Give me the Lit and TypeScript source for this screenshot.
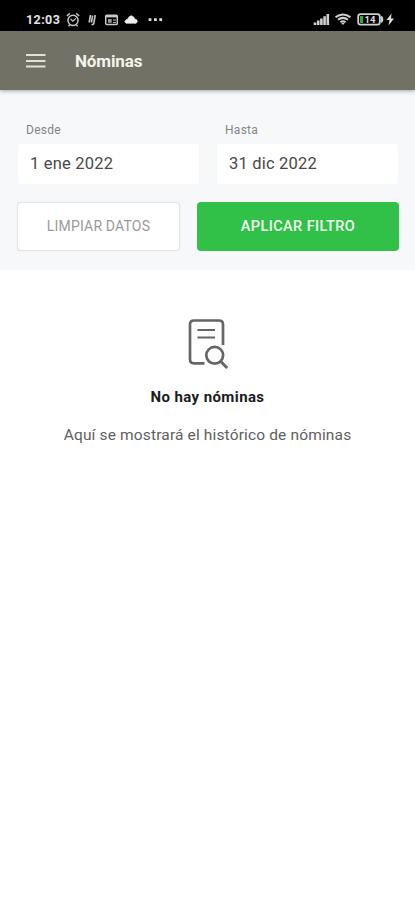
import { LitElement, html, css } from "lit";
import { customElement } from "lit/decorators.js";

@customElement("status-bar")
class StatusBar extends LitElement {
  static styles = css`
    :host { display: flex; justify-content: space-between; box-sizing: border-box; height: 31px;
      padding: 9px 20px 0 26px; background: #000; color: #e4e4e4; }
    .side { display: flex; align-items: flex-start; }
    .time { width: 40px; font: 700 12.5px/21px Roboto, sans-serif; letter-spacing: 0.4px; white-space: nowrap; }
    svg { display: block; flex: none; }
  `;
  render() {
    return html`
      <div class="side">
        <span class="time">12:03</span>
        <svg width="102" height="20" viewBox="66 9 102 20" fill="none" stroke="#c8c8c8">
          <circle cx="73" cy="20.3" r="5.1" stroke-width="1.5" />
          <path d="M66.8 16l3-2.6M79.2 16l-3-2.6M69.5 25l-1 1.3M76.5 25l1 1.3" stroke-width="1.4" />
          <path d="M70.6 19l2.3 2.2 3-2.8" stroke-width="1.2" />
          <path d="M90.4 15l-1.2 7.5M95.2 15l-1.3 8q-.5 2-2.4 1.4M92.6 15.5l-1.2 7" stroke-width="1.6" />
          <rect x="105.7" y="15.2" width="11.6" height="9.3" rx="1" stroke-width="1.5" />
          <path d="M106 16.5h11" stroke-width="1.8" />
          <rect x="108" y="19" width="3.7" height="3.8" fill="#999" stroke="none" />
          <path d="M113 20h3M113 22.4h3" stroke-width="1" />
          <path d="M126 23.3l-1.3-1.6 1-1.6 2-1 1.6-2.6 2.2-.8 2.2 1.3.8 1.8 2.3 1 .6 2-1.2 1.5z" fill="#eee" stroke="#eee" stroke-width=".6" stroke-linejoin="round" />
          <path d="M148.6 18.3h2.8v2.8h-2.8zM154 18.3h2.8v2.8H154zM159.3 18.3h2.8v2.8h-2.8z" fill="#ddd" stroke="none" />
        </svg>
      </div>
      <div class="side">
        <svg width="82" height="20" viewBox="313 9 82 20" fill="none" stroke="#cfcfcf">
          <path d="M315 22.6v2.4M318.2 20.6V25M321.4 18.5V25M324.6 16.3V25M327.8 14V25" stroke-width="2.6" />
          <path d="M335.5 17.3q7.5-5.6 15 0M338 19.8q5-3.8 10 0M340.4 22.2q2.6-2 5.2 0" stroke-width="2" />
          <path d="M341 22.8l2 2.3 2-2.3z" fill="#cfcfcf" stroke="none" />
          <rect x="358.2" y="14.2" width="21.6" height="10.4" rx="2.4" stroke-width="1.8" />
          <path d="M381 16.5q2.4 2.9 0 5.8" stroke-width="2.2" />
          <rect x="360" y="16" width="3" height="7" fill="#35a635" stroke="none" />
          <text x="364.5" y="23" font-family="Roboto, sans-serif" font-size="9.5" font-weight="700" fill="#ddd" stroke="none">14</text>
          <path d="M391.5 13.5l-5 6.5h3l-1 5.5 5.5-7h-3z" fill="#ddd" stroke="none" />
        </svg>
      </div>
    `;
  }
}

@customElement("date-field")
class DateField extends LitElement {
  static properties = { label: {}, value: {} };
  declare label: string;
  declare value: string;
  static styles = css`
    :host { display: block; }
    .label { padding-left: 8px; font-size: 12px; line-height: 16px; color: #858585; letter-spacing: 0.28px; }
    .box { margin-top: 6px; height: 40px; box-sizing: border-box; padding-left: 12px; border-radius: 3px;
      background: #fff; box-shadow: 0 0 2px #eef0f2; font-size: 16.5px; line-height: 40px; color: #484848; letter-spacing: 0.2px; }
  `;
  render() {
    return html`<div class="label">${this.label}</div><div class="box">${this.value}</div>`;
  }
}

@customElement("app-root")
class AppRoot extends LitElement {
  static styles = css`
    :host { display: block; height: 900px; background: #fff; font-family: Roboto, sans-serif; overflow: hidden; }
    .header { position: relative; display: flex; align-items: center; gap: 29px; height: 59px; padding-left: 26px;
      background: #727165; box-shadow: 0 1px 4px rgba(0, 0, 0, 0.35); }
    .header svg { display: block; }
    .title { font-size: 17px; font-weight: 700; line-height: 24px; color: #f4f4ec; letter-spacing: -0.12px; }
    .filters { height: 180px; box-sizing: border-box; padding: 32px 16px 0 18px; background: #f6f8fa; }
    .dates { display: grid; grid-template-columns: 181px 181px; gap: 18px; }
    .buttons { display: grid; grid-template-columns: 163px 202px; justify-content: space-between;
      margin: 18px 0 0 -1px; }
    .btn { height: 49px; box-sizing: border-box; padding: 0 0 2px; border-radius: 4px; font: 400 14.5px/20px Roboto, sans-serif; white-space: nowrap; }
    .clear { border: 1.5px solid #e4e5e7; background: #fff; color: #9a9a9a; font-size: 14px; letter-spacing: 0.18px; box-shadow: 0 0 1px #dfe1e3; }
    .apply { padding: 0; border: 0; background: #31c148; color: #f1fff3; font-weight: 500; letter-spacing: 0.4px; }
    .empty { display: flex; flex-direction: column; align-items: center; padding-top: 47px; }
    .heading { margin-top: 17px; font-size: 15px; font-weight: 700; line-height: 20px; color: #1c1c1c; letter-spacing: 0.4px; }
    .text { margin-top: 18px; font-size: 15.5px; line-height: 20px; color: #606060; letter-spacing: 0.15px; }
  `;
  render() {
    return html`
      <status-bar></status-bar>
      <div class="header">
        <svg width="20" height="16" viewBox="0 0 20 16" stroke="#e2e2d6" stroke-width="2"><path d="M0 2h19.5M0 8h19.5M0 13.5h19.5" /></svg>
        <span class="title">Nóminas</span>
      </div>
      <div class="filters">
        <div class="dates">
          <date-field label="Desde" value="1 ene 2022"></date-field>
          <date-field label="Hasta" value="31 dic 2022"></date-field>
        </div>
        <div class="buttons">
          <button class="btn clear">LIMPIAR DATOS</button>
          <button class="btn apply">APLICAR FILTRO</button>
        </div>
      </div>
      <div class="empty">
        <svg width="40" height="53" viewBox="188 317 40 53" fill="none" stroke="#656565" stroke-width="2.7">
          <path d="M204.5 363.3H194q-4 0-4-4V324.5q0-4 4-4h25q4 0 4 4V345" />
          <path d="M197.5 330H215M197.5 337.5H215" stroke-width="2.2" />
          <circle cx="214.7" cy="355.3" r="8.4" />
          <path d="M220.8 361.5l6.4 6.5" stroke-width="3" />
        </svg>
        <div class="heading">No hay nóminas</div>
        <div class="text">Aquí se mostrará el histórico de nóminas</div>
      </div>
    `;
  }
}
